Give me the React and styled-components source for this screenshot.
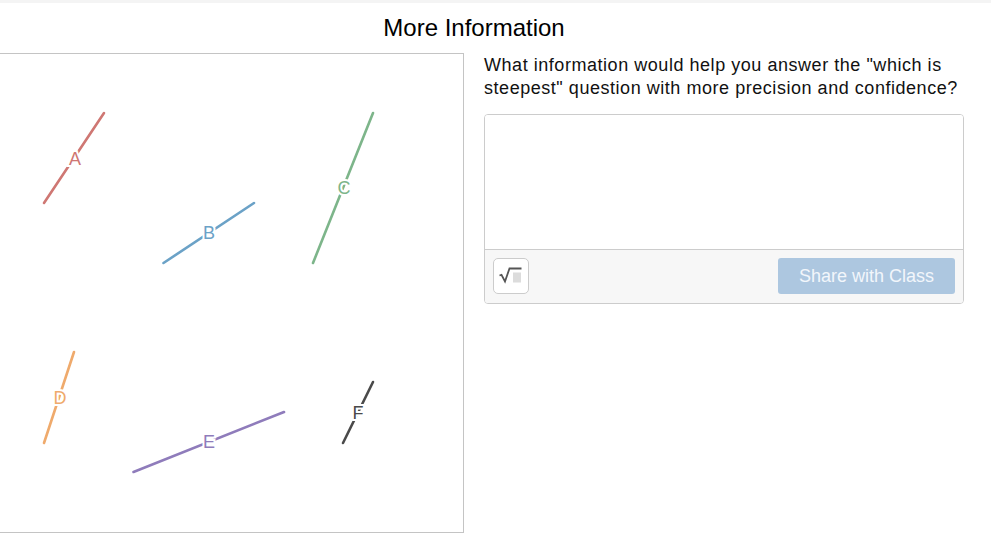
import React from "react";
import styled, { createGlobalStyle } from "styled-components";

const GlobalStyle = createGlobalStyle`
  html, body {
    margin: 0;
    padding: 0;
    background: #fff;
    font-family: "Liberation Sans", Arial, sans-serif;
  }
`;

const segments = [
  { label: "A", color: "#cf7773", x1: 44, y1: 149, x2: 104, y2: 59, lx: 75, ly: 105 },
  { label: "B", color: "#6ba2c7", x1: 163.5, y1: 209, x2: 254, y2: 149, lx: 209, ly: 178.5 },
  { label: "C", color: "#7db58a", x1: 313, y1: 209, x2: 373, y2: 59, lx: 344, ly: 133.5 },
  { label: "D", color: "#efaa6c", x1: 44, y1: 389, x2: 74, y2: 298, lx: 60, ly: 343.5 },
  { label: "E", color: "#8f7cbb", x1: 133.5, y1: 418, x2: 284, y2: 358, lx: 209, ly: 387.5 },
  { label: "F", color: "#4a4a4a", x1: 343, y1: 389, x2: 373, y2: 328, lx: 358, ly: 358.5 },
];

function App() {
  return (
    <Page>
      <GlobalStyle />
      <TopStrip />
      <Title>More Information</Title>
      <Columns>
        <Figure>
          <svg width="463" height="478" viewBox="0 0 463 478">
            {segments.map((s) => (
              <g key={s.label}>
                <line x1={s.x1} y1={s.y1} x2={s.x2} y2={s.y2} stroke={s.color} strokeWidth="2.6" strokeLinecap="round" />
                <Label x={s.lx} y={s.ly} fill={s.color}>{s.label}</Label>
              </g>
            ))}
          </svg>
        </Figure>
        <Side>
          <Prompt>
            What information would help you answer the "which is steepest" question with more precision and confidence?
          </Prompt>
          <Editor>
            <Answer />
            <Toolbar>
              <MathButton aria-label="Insert math">
                <svg width="24" height="20" viewBox="0 0 24 20">
                  <rect x="14" y="6.5" width="8" height="10" fill="#dcdcdc" />
                  <path d="M0.5 9.5 L2.5 8.8 L6 15.5 L10.5 2.5 H22.5" fill="none" stroke="#555" strokeWidth="1.8" />
                </svg>
              </MathButton>
              <ShareButton disabled>Share with Class</ShareButton>
            </Toolbar>
          </Editor>
        </Side>
      </Columns>
    </Page>
  );
}

const Page = styled.div`
  width: 991px;
  height: 550px;
  overflow: hidden;
  color: #111;
`;

const TopStrip = styled.div`
  height: 3px;
  background: #f4f4f4;
`;

const Title = styled.h1`
  margin: 0;
  height: 50px;
  box-sizing: border-box;
  padding: 10px 43px 0 0;
  font-size: 24px;
  line-height: 30px;
  font-weight: 400;
  text-align: center;
  color: #000;
`;

const Columns = styled.div`
  display: flex;
  align-items: flex-start;
  gap: 20px;
`;

const Figure = styled.div`
  width: 463px;
  height: 478px;
  flex: none;
  background: #fff;
  border: 1px solid #c4c4c4;
  border-left: none;

  svg {
    display: block;
  }
`;

const Label = styled.text`
  font-size: 18px;
  text-anchor: middle;
  dominant-baseline: central;
  stroke: #fff;
  stroke-width: 4px;
  paint-order: stroke;
`;

const Side = styled.div`
  width: 480px;
  flex: none;
`;

const Prompt = styled.p`
  margin: 0;
  padding-top: 1px;
  font-size: 18px;
  line-height: 23px;
  letter-spacing: 0.54px;
  color: #111;
`;

const Editor = styled.div`
  margin-top: 14px;
  height: 190px;
  box-sizing: border-box;
  border: 1px solid #ccc;
  border-radius: 4px;
  overflow: hidden;
`;

const Answer = styled.div`
  height: 134px;
  background: #fff;
`;

const Toolbar = styled.div`
  height: 54px;
  box-sizing: border-box;
  display: flex;
  align-items: center;
  justify-content: space-between;
  padding: 0 8px 2px;
  background: #f7f7f7;
  border-top: 1px solid #ccc;
`;

const MathButton = styled.button`
  width: 36px;
  height: 36px;
  padding: 0;
  display: flex;
  align-items: center;
  justify-content: center;
  background: #fff;
  border: 1px solid #ccc;
  border-radius: 5px;
`;

const ShareButton = styled.button`
  width: 177px;
  height: 36px;
  padding: 2px 0 0;
  border: none;
  border-radius: 3px;
  background: #adc7e0;
  color: #f2f6fb;
  font-family: inherit;
  font-size: 18px;
`;

export default App;
